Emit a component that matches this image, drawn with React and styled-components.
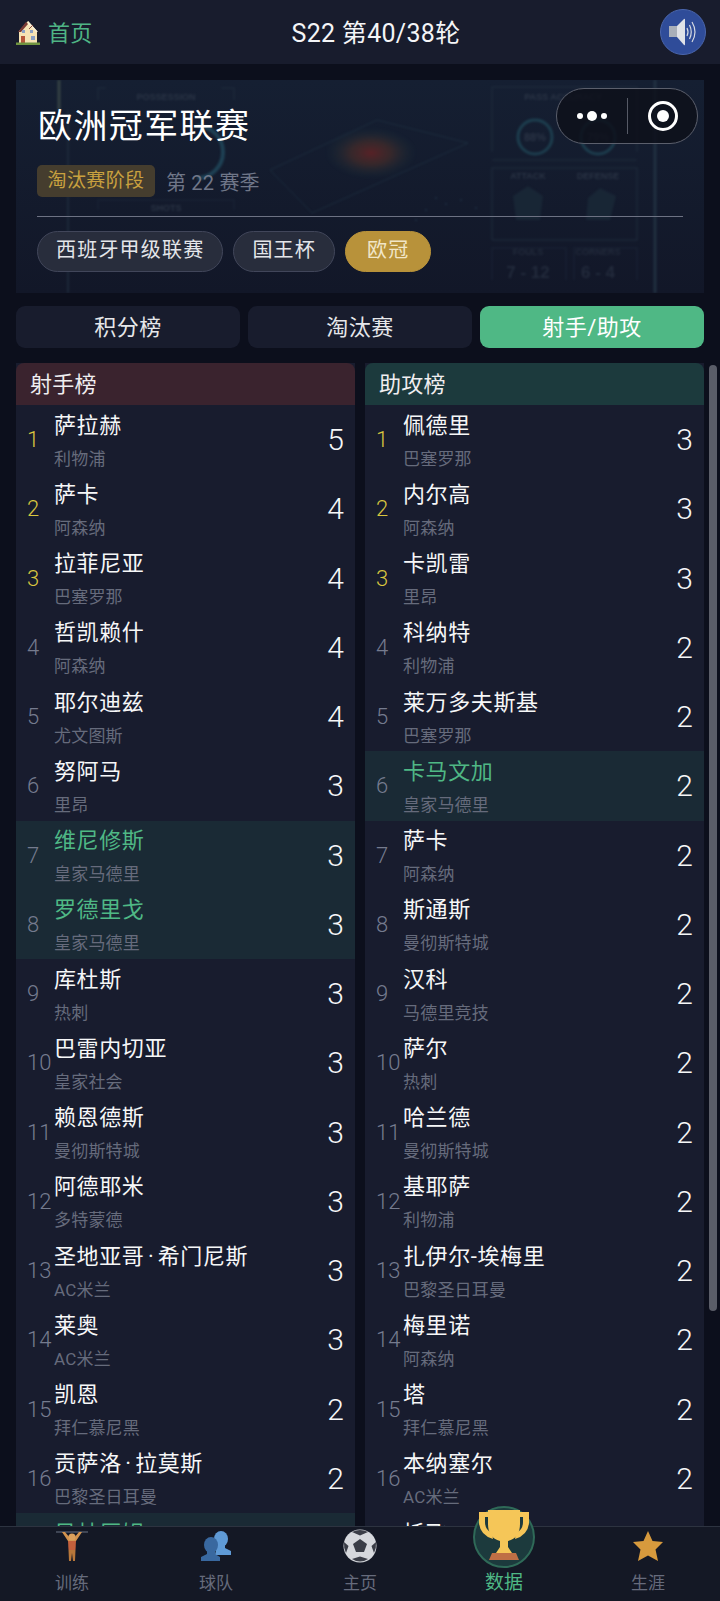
import React from 'react'
import styled, { createGlobalStyle } from 'styled-components'

const GlobalStyle = createGlobalStyle`
  html, body {
    margin: 0;
    padding: 0;
    background: #0c0f1c;
  }
  * {
    box-sizing: border-box;
  }
`

const Page = styled.div`
  position: relative;
  width: 720px;
  height: 1601px;
  overflow: hidden;
  background: #0c0f1c;
  color: #fff;
  font-family: "Roboto", "Noto Sans CJK SC", sans-serif;
`

const TopBar = styled.div`
  height: 64px;
  padding: 0 16px;
  display: grid;
  grid-template-columns: 1fr auto 1fr;
  align-items: center;
  background: #181c2d;
`

const HomeLink = styled.div`
  display: flex;
  align-items: center;
  gap: 8px;
  color: #4fb585;
`

const HomeText = styled.span`
  font-size: 22px;
  letter-spacing: 0.3px;
  margin-bottom: 3px;
`

const RoundTitle = styled.div`
  margin-left: 32px;
  margin-bottom: 3px;
  font-size: 25px;
  letter-spacing: 0.3px;
  color: #f4f5f7;
`

const SoundButton = styled.div`
  justify-self: end;
  margin-right: -2px;
  width: 46px;
  height: 46px;
  border-radius: 50%;
  background: #2f4c99;
  border: 1px solid #4a66ad;
  display: flex;
  align-items: center;
  justify-content: center;
`

const Content = styled.div`
  padding: 16px 16px 0;
`

const Banner = styled.div`
  position: relative;
  height: 213px;
  padding: 26px 21px 0;
  background: linear-gradient(#151f32, #121728);
  overflow: hidden;
`

const BannerArt = styled.svg`
  position: absolute;
  left: 0;
  top: 0;
  opacity: 0.8;
  filter: blur(1px);
`

const BannerBody = styled.div`
  position: relative;
`

const LeagueTitle = styled.div`
  margin-left: 1px;
  font-size: 34px;
  line-height: 40px;
  letter-spacing: 1.4px;
  color: #fff;
`

const StageRow = styled.div`
  margin-top: 19px;
  display: flex;
  align-items: center;
  gap: 11px;
`

const StageBadge = styled.div`
  height: 32px;
  width: 118px;
  border-radius: 5px;
  background: #453d2e;
  color: #c9a13f;
  font-size: 19px;
  line-height: 31px;
  letter-spacing: 0.4px;
  text-align: center;
`

const SeasonText = styled.div`
  font-size: 20px;
  letter-spacing: 0.2px;
  color: #6f7688;
`

const Divider = styled.div`
  margin-top: 19px;
  height: 1px;
  background: #6d7283;
`

const PillRow = styled.div`
  margin-top: 14px;
  display: flex;
  gap: 10px;
`

const Pill = styled.div`
  height: 41px;
  padding: 0 ${p => (p.$active ? '21px' : '18px')};
  border-radius: 21px;
  font-size: 20px;
  line-height: 37px;
  letter-spacing: 1.2px;
  color: ${p => (p.$active ? '#f1e6c8' : '#e4e6ea')};
  background: ${p => (p.$active ? '#b8923a' : '#282d3c')};
  border: 1px solid ${p => (p.$active ? '#b8923a' : '#41465a')};
`

const Tabs = styled.div`
  margin-top: 13px;
  display: grid;
  grid-template-columns: repeat(3, 1fr);
  gap: 8px;
`

const Tab = styled.div`
  height: 42px;
  border-radius: 9px;
  font-size: 22px;
  line-height: 43px;
  text-align: center;
  letter-spacing: 0.5px;
  color: ${p => (p.$active ? '#fff' : '#e6e7ea')};
  background: ${p => (p.$active ? '#4fb885' : '#181c2d')};
`

const Boards = styled.div`
  margin-top: 15px;
  display: grid;
  grid-template-columns: 1fr 1fr;
  gap: 10px;
`

const Board = styled.div`
  background: #181c2e;
`

const BoardHead = styled.div`
  height: 42px;
  padding-left: 14px;
  border-radius: 8px 8px 0 0;
  font-size: 22px;
  line-height: 44px;
  letter-spacing: 0.3px;
  color: #f0eef0;
  background: ${p => (p.$tone === 'red' ? '#3a232e' : '#1c3a3d')};
`

const Row = styled.div`
  position: relative;
  height: 69.25px;
  display: flex;
  align-items: center;
  background: ${p => (p.$star ? '#1a2a35' : 'transparent')};
`

const Rank = styled.div`
  width: 38px;
  padding-left: 11px;
  font-size: 22px;
  font-weight: 300;
  color: ${p => (p.$top ? '#d9c63f' : '#757b8e')};
`

const Player = styled.div`
  flex: 1;
  min-width: 0;
  padding-top: 2px;
`

const PlayerName = styled.div`
  font-size: 22px;
  line-height: 30px;
  letter-spacing: 0.6px;
  white-space: nowrap;
  color: ${p => (p.$star ? '#4fb885' : '#f6f7f8')};
`

const NameDot = styled.span`
  margin: 0 3.5px;
`

const TeamName = styled.div`
  margin-top: 6px;
  font-size: 17px;
  line-height: 24px;
  letter-spacing: 0.2px;
  white-space: nowrap;
  color: #666b7c;
`

const Score = styled.div`
  padding-right: 11px;
  font-size: 30px;
  font-weight: 300;
  color: #f6f7f8;
`

const ScrollThumb = styled.div`
  position: absolute;
  left: 709px;
  top: 365px;
  width: 8px;
  height: 946px;
  border-radius: 4px;
  background: #5a5d68;
`

const Capsule = styled.div`
  position: absolute;
  left: 556px;
  top: 88px;
  width: 142px;
  height: 56px;
  border-radius: 28px;
  background: rgba(14, 16, 26, 0.82);
  border: 1px solid #5b5f6c;
  display: flex;
  align-items: center;
`

const CapsulePart = styled.div`
  flex: ${p => (p.$split ? '1' : '0 0 70px')};
  height: 36px;
  display: flex;
  align-items: center;
  justify-content: center;
  border-left: ${p => (p.$split ? '1px solid #565a66' : 'none')};
`

const BottomNav = styled.div`
  position: absolute;
  left: 0;
  right: 0;
  bottom: 0;
  height: 75px;
  display: grid;
  grid-template-columns: repeat(5, 1fr);
  background: #141825;
  border-top: 1px solid #2d3340;
`

const NavItem = styled.div`
  position: relative;
  display: flex;
  flex-direction: column;
  align-items: center;
`

const NavIcon = styled.div`
  height: 38px;
  display: flex;
  align-items: center;
  justify-content: center;
`

const NavLabel = styled.div`
  margin-top: 6px;
  font-size: ${p => (p.$active ? '19px' : '17px')};
  line-height: 24px;
  color: ${p => (p.$active ? '#4fb885' : '#666b7c')};
`

const TrophyWrap = styled.div`
  position: absolute;
  left: 50%;
  top: -21px;
  margin-left: -31px;
  width: 62px;
  height: 62px;
`

const scorers = [
  ['萨拉赫', '利物浦', 5], ['萨卡', '阿森纳', 4], ['拉菲尼亚', '巴塞罗那', 4], ['哲凯赖什', '阿森纳', 4],
  ['耶尔迪兹', '尤文图斯', 4], ['努阿马', '里昂', 3], ['维尼修斯', '皇家马德里', 3, true], ['罗德里戈', '皇家马德里', 3, true],
  ['库杜斯', '热刺', 3], ['巴雷内切亚', '皇家社会', 3], ['赖恩德斯', '曼彻斯特城', 3], ['阿德耶米', '多特蒙德', 3],
  ['圣地亚哥·希门尼斯', 'AC米兰', 3], ['莱奥', 'AC米兰', 3], ['凯恩', '拜仁慕尼黑', 2], ['贡萨洛·拉莫斯', '巴黎圣日耳曼', 2],
  ['贝林厄姆', '皇家马德里', 2, true],
]

const assists = [
  ['佩德里', '巴塞罗那', 3], ['内尔高', '阿森纳', 3], ['卡凯雷', '里昂', 3], ['科纳特', '利物浦', 2],
  ['莱万多夫斯基', '巴塞罗那', 2], ['卡马文加', '皇家马德里', 2, true], ['萨卡', '阿森纳', 2], ['斯通斯', '曼彻斯特城', 2],
  ['汉科', '马德里竞技', 2], ['萨尔', '热刺', 2], ['哈兰德', '曼彻斯特城', 2], ['基耶萨', '利物浦', 2],
  ['扎伊尔-埃梅里', '巴黎圣日耳曼', 2], ['梅里诺', '阿森纳', 2], ['塔', '拜仁慕尼黑', 2], ['本纳塞尔', 'AC米兰', 2],
  ['托飞', '阿森纳', 2],
]

const HouseIcon = () => (
  <svg width="24" height="26" viewBox="0 0 24 26">
    <path d="M3 12 L12 2 L21 12 V24 H3 Z" fill="#f6e3b4" />
    <path d="M2 13 L10 3 L12 5 L5 13 Z" fill="#7a3a34" />
    <path d="M12 2 L22 13 H20 L12 5 Z" fill="#f9efd6" />
    <path d="M13 10 L17 6" stroke="#8b4b3e" strokeWidth="1" />
    <rect x="5" y="17" width="4" height="7" fill="#b5553a" />
    <rect x="15" y="17" width="4" height="4" fill="#8aa0c4" />
    <rect x="6" y="11" width="3" height="3" fill="#8aa0c4" />
    <rect x="14" y="11" width="3" height="3" fill="#8aa0c4" />
    <rect x="0" y="23.5" width="24" height="2.5" fill="#6f9440" />
  </svg>
)

const SpeakerIcon = () => (
  <svg width="36" height="36" viewBox="0 0 36 36">
    <rect x="4" y="12" width="8" height="11" fill="#a9afb9" />
    <path d="M12 12 L19 5 Q20 4 20 6 V30 Q20 32 19 31 L12 23 Z" fill="#dfe2e8" />
    <g fill="none" stroke="#d6dae2" strokeWidth="1.2">
      <path d="M22 14 Q24 18 22 22" />
      <path d="M24.5 11 Q28 18 24.5 25" />
      <path d="M27 8 Q33 18 27 28" />
    </g>
  </svg>
)

const MoreDots = () => (
  <svg width="32" height="12" viewBox="0 0 32 12">
    <circle cx="4" cy="6" r="3" fill="#fff" />
    <circle cx="16" cy="6" r="5" fill="#fff" />
    <circle cx="28" cy="6" r="3" fill="#fff" />
  </svg>
)

const CloseRing = () => (
  <svg width="32" height="32" viewBox="0 0 32 32">
    <circle cx="16" cy="16" r="13.5" fill="none" stroke="#fff" strokeWidth="3" />
    <circle cx="16" cy="16" r="6" fill="#fff" />
  </svg>
)

const LifterIcon = () => (
  <svg width="32" height="32" viewBox="0 0 32 32">
    <rect x="0" y="1" width="32" height="2" fill="#3f4554" />
    <path d="M6 2 L12 11 H20 L26 2 L23 2 L18 8 H14 L9 2 Z" fill="#d3934e" />
    <circle cx="16" cy="7" r="3.6" fill="#dba05c" />
    <path d="M12 11 H20 L19.5 20 H12.5 Z" fill="#c4603c" />
    <path d="M12.5 20 H19.5 L19 31 H17 L16 23 L15 31 H13 Z" fill="#b7773a" />
  </svg>
)

const PeopleIcon = () => (
  <svg width="30" height="30" viewBox="0 0 30 30">
    <ellipse cx="20" cy="8" rx="7" ry="8" fill="#5f9ad6" />
    <path d="M16 14 H24 V17 L30 20 V24 H14 Z" fill="#5f9ad6" />
    <ellipse cx="10" cy="14" rx="7" ry="8" fill="#39689f" />
    <path d="M6 20 H14 V23 L19 26 V30 H0 V26 L6 23 Z" fill="#39689f" />
  </svg>
)

const BallIcon = () => (
  <svg width="34" height="34" viewBox="0 0 34 34">
    <circle cx="17" cy="17" r="16.5" fill="#d6d8dd" />
    <path d="M17 10 L24 15 L21 23 H13 L10 15 Z" fill="#3a3d47" />
    <path d="M9 3 Q17 -1 25 3 L17 6.5 Z" fill="#3a3d47" />
    <path d="M1 13 Q0.5 19 3 24 L5.5 17 Z" fill="#3a3d47" />
    <path d="M33 13 Q33.5 19 31 24 L28.5 17 Z" fill="#3a3d47" />
    <path d="M9 30 Q17 35 25 30 L17 27.5 Z" fill="#3a3d47" />
  </svg>
)

const TrophyIcon = () => (
  <svg width="62" height="62" viewBox="0 0 62 62">
    <circle cx="31" cy="31" r="30" fill="#1c3a3d" stroke="#2f6a58" strokeWidth="2" />
    <path d="M16 6 H6 V17 Q7 29 20 33 L19 27 Q12 24 12 16 V11 H16 Z" fill="#f5c658" />
    <path d="M46 6 H56 V17 Q55 29 42 33 L43 27 Q50 24 50 16 V11 H46 Z" fill="#f5c658" />
    <path d="M15 4 H47 V18 Q47 32 35 35 V41 L39 47 H23 L27 41 V35 Q15 32 15 18 Z" fill="#f5c658" />
    <path d="M19 47 H43 L46 54 H16 Z" fill="#bf6f45" />
  </svg>
)

const StarIcon = () => (
  <svg width="30" height="30" viewBox="0 0 30 30">
    <path d="M15 0 L19.5 10 L30 11 L22.5 18.5 L25 30 L15 24.5 L5 30 L7.5 18.5 L0 11 L10.5 10 Z" fill="#d79a3d" />
  </svg>
)

// the faint dashboard photo behind the league title
const BannerPicture = () => (
  <BannerArt width="688" height="213" viewBox="0 0 688 213">
    <defs>
      <radialGradient id="heat">
        <stop offset="0%" stopColor="#6e2424" stopOpacity="0.95" />
        <stop offset="45%" stopColor="#5a3428" stopOpacity="0.6" />
        <stop offset="100%" stopColor="#1e3f44" stopOpacity="0" />
      </radialGradient>
    </defs>
    <ellipse cx="355" cy="73" rx="46" ry="26" fill="url(#heat)" />
    <path d="M254 90 L361 40 L452 63 L296 133 Z" fill="none" stroke="#1f3142" strokeWidth="1" />
    <g fill="none" stroke="#1f2b3d" strokeWidth="1.5">
      <path d="M82 20 V8 H90 M205 8 H218 V20" />
      <path d="M82 130 V120 H218 V130" opacity="0.6" />
      <path d="M476 72 V7 H621 V72 M476 80 H621" />
      <path d="M476 160 V88 H621 V160 H476" />
      <path d="M476 200 V168 H550 V200 M558 200 V168 H621 V200" opacity="0.6" />
    </g>
    <path d="M43 0 V30" stroke="#3c4a48" strokeWidth="3" />
    <path d="M52 30 V213" stroke="#1f2d3d" strokeWidth="2" />
    <path d="M639 0 V213" stroke="#243546" strokeWidth="3" />
    <path d="M181 46 A 26 26 0 0 1 181 98" fill="none" stroke="#24566a" strokeWidth="4" opacity="0.8" />
    <circle cx="519" cy="57" r="17" fill="none" stroke="#1f4656" strokeWidth="3" />
    <circle cx="582" cy="57" r="17" fill="none" stroke="#1f4656" strokeWidth="3" />
    <path d="M512 106 L527 116 L524 140 L500 140 L497 116 Z" fill="#1a2938" />
    <path d="M584 108 L600 116 L594 140 L570 140 L572 118 Z" fill="#1a2938" />
    <g fill="#22384a">
      <circle cx="420" cy="118" r="1" /><circle cx="430" cy="124" r="1" /><circle cx="445" cy="120" r="1" />
      <circle cx="410" cy="130" r="1" /><circle cx="460" cy="128" r="1" /><circle cx="400" cy="140" r="1" />
    </g>
    <g fontFamily="Liberation Sans, sans-serif" fontWeight="700" fill="#303a4b">
      <text x="150" y="20" fontSize="9" textAnchor="middle">POSSESSION</text>
      <text x="150" y="131" fontSize="9" textAnchor="middle">SHOTS</text>
      <text x="547" y="20" fontSize="9" textAnchor="middle">PASS ACCURACY</text>
      <text x="519" y="61" fontSize="11" textAnchor="middle">88%</text>
      <text x="582" y="61" fontSize="11" textAnchor="middle">79%</text>
      <text x="512" y="99" fontSize="9" textAnchor="middle">ATTACK</text>
      <text x="582" y="99" fontSize="9" textAnchor="middle">DEFENSE</text>
      <text x="512" y="175" fontSize="9" textAnchor="middle" opacity="0.7">FOULS</text>
      <text x="582" y="175" fontSize="9" textAnchor="middle" opacity="0.7">CORNERS</text>
      <text x="512" y="198" fontSize="17" textAnchor="middle" opacity="0.7">7 - 12</text>
      <text x="582" y="198" fontSize="17" textAnchor="middle" opacity="0.7">6 - 4</text>
    </g>
  </BannerArt>
)

// names like 贡萨洛·拉莫斯 get a bit of air round the dot
const renderName = name => {
  const [first, last] = name.split('·')
  if (!last) return name
  return (
    <>
      {first}
      <NameDot>·</NameDot>
      {last}
    </>
  )
}

const BoardList = ({ title, tone, rows }) => (
  <Board>
    <BoardHead $tone={tone}>{title}</BoardHead>
    {rows.map((r, i) => (
      <Row key={i} $star={r[3]}>
        <Rank $top={i < 3}>{i + 1}</Rank>
        <Player>
          <PlayerName $star={r[3]}>{renderName(r[0])}</PlayerName>
          <TeamName>{r[1]}</TeamName>
        </Player>
        <Score>{r[2]}</Score>
      </Row>
    ))}
  </Board>
)

const navItems = [
  { label: '训练', icon: <LifterIcon /> },
  { label: '球队', icon: <PeopleIcon /> },
  { label: '主页', icon: <BallIcon /> },
  { label: '数据', active: true },
  { label: '生涯', icon: <StarIcon /> },
]

export default function App() {
  return (
    <Page>
      <GlobalStyle />
      <TopBar>
        <HomeLink>
          <HouseIcon />
          <HomeText>首页</HomeText>
        </HomeLink>
        <RoundTitle>S22 第40/38轮</RoundTitle>
        <SoundButton>
          <SpeakerIcon />
        </SoundButton>
      </TopBar>

      <Content>
        <Banner>
          <BannerPicture />
          <BannerBody>
            <LeagueTitle>欧洲冠军联赛</LeagueTitle>
            <StageRow>
              <StageBadge>淘汰赛阶段</StageBadge>
              <SeasonText>第 22 赛季</SeasonText>
            </StageRow>
            <Divider />
            <PillRow>
              <Pill>西班牙甲级联赛</Pill>
              <Pill>国王杯</Pill>
              <Pill $active>欧冠</Pill>
            </PillRow>
          </BannerBody>
        </Banner>

        <Tabs>
          <Tab>积分榜</Tab>
          <Tab>淘汰赛</Tab>
          <Tab $active>射手/助攻</Tab>
        </Tabs>

        <Boards>
          <BoardList title="射手榜" tone="red" rows={scorers} />
          <BoardList title="助攻榜" tone="green" rows={assists} />
        </Boards>
      </Content>

      <ScrollThumb />

      <Capsule>
        <CapsulePart>
          <MoreDots />
        </CapsulePart>
        <CapsulePart $split>
          <CloseRing />
        </CapsulePart>
      </Capsule>

      <BottomNav>
        {navItems.map(item => (
          <NavItem key={item.label}>
            {item.active && (
              <TrophyWrap>
                <TrophyIcon />
              </TrophyWrap>
            )}
            <NavIcon>{item.icon}</NavIcon>
            <NavLabel $active={item.active}>{item.label}</NavLabel>
          </NavItem>
        ))}
      </BottomNav>
    </Page>
  )
}
